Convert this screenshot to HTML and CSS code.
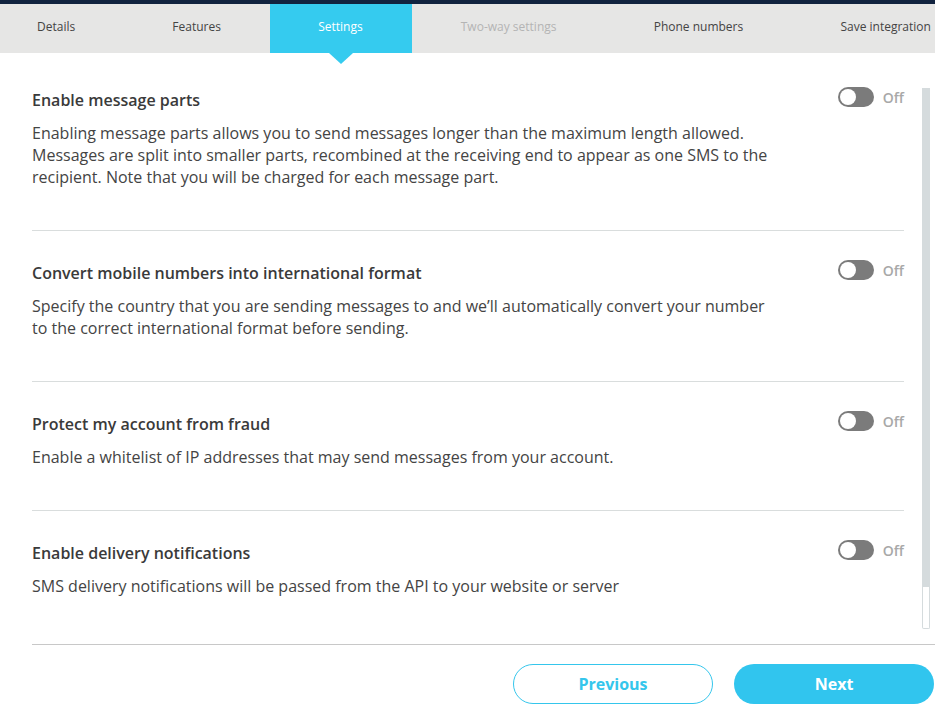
FILE: index.html
```html
<!DOCTYPE html>
<html lang="en">
<head>
<meta charset="utf-8">
<title>Integration settings</title>
<link rel="stylesheet" href="styles.css">
</head>
<body>
<div class="topbar"></div>
<nav class="tabs">
  <div class="tab first">Details</div>
  <div class="tab">Features</div>
  <div class="tab active">Settings</div>
  <div class="tab disabled">Two-way settings</div>
  <div class="tab">Phone numbers</div>
  <div class="tab">Save integration</div>
</nav>
<main class="content">
  <div class="scroll">
    <div class="list">
      <section class="setting">
        <div class="text">
          <h2 class="title">Enable message parts</h2>
          <p class="desc">Enabling message parts allows you to send messages longer than the maximum length allowed. Messages are split into smaller parts, recombined at the receiving end to appear as one SMS to the recipient. Note that you will be charged for each message part.</p>
        </div>
        <div class="switch"><span class="toggle"><span class="knob"></span></span><span class="state">Off</span></div>
      </section>
      <section class="setting">
        <div class="text">
          <h2 class="title">Convert mobile numbers into international format</h2>
          <p class="desc">Specify the country that you are sending messages to and we’ll automatically convert your number to the correct international format before sending.</p>
        </div>
        <div class="switch"><span class="toggle"><span class="knob"></span></span><span class="state">Off</span></div>
      </section>
      <section class="setting">
        <div class="text">
          <h2 class="title">Protect my account from fraud</h2>
          <p class="desc">Enable a whitelist of IP addresses that may send messages from your account.</p>
        </div>
        <div class="switch"><span class="toggle"><span class="knob"></span></span><span class="state">Off</span></div>
      </section>
      <section class="setting last">
        <div class="text">
          <h2 class="title">Enable delivery notifications</h2>
          <p class="desc">SMS delivery notifications will be passed from the API to your website or server</p>
        </div>
        <div class="switch"><span class="toggle"><span class="knob"></span></span><span class="state">Off</span></div>
      </section>
    </div>
    <div class="scrollbar">
      <div class="thumb"></div>
      <div class="track"></div>
    </div>
  </div>
  <footer class="footer">
    <button class="btn btn-outline">Previous</button>
    <button class="btn btn-primary">Next</button>
  </footer>
</main>
</body>
</html>
```
FILE: styles.css
```css
* { box-sizing: border-box; }
html, body { margin: 0; padding: 0; background: #fff; }
body {
  font-family: "Open Sans", "Noto Sans", sans-serif;
  color: #3b3b3b;
  width: 935px;
  height: 705px;
  overflow: hidden;
}
.topbar { height: 4px; background: #11233f; }
.tabs {
  display: flex;
  height: 49px;
  background: #e6e6e5;
  white-space: nowrap;
}
.tab {
  display: flex;
  align-items: center;
  padding: 0 48.6px 4px 48.6px;
  font-size: 12px;
  color: #444;
  position: relative;
}
.tab.first { padding-left: 37px; }
.tab.active {
  background: #35cbef;
  color: #fff;
  padding-right: 49.5px;
}
.tab.active::after {
  content: "";
  position: absolute;
  left: 50%;
  bottom: -11px;
  margin-left: -12px;
  border-left: 12px solid transparent;
  border-right: 12px solid transparent;
  border-top: 11px solid #35cbef;
}
.tab.disabled { color: #b4b4b4; }

.content { padding-left: 32px; }
.scroll {
  display: flex;
  margin-top: 36px;
  height: 540px;
}
.list { width: 872px; }
.setting {
  display: grid;
  grid-template-columns: 1fr auto;
  padding: 31px 0 42.5px;
  border-bottom: 1px solid #d9dddd;
}
.setting:first-child { padding-top: 0; padding-bottom: 42.5px; }
.setting.last { border-bottom: none; }
.text { max-width: 742px; }
.title {
  margin: 0;
  font-size: 16px;
  line-height: 22px;
  font-weight: 600;
  color: #3a3a3a;
}
.desc {
  margin: 10.5px 0 0;
  font-size: 16px;
  line-height: 22px;
  color: #444;
}
.switch {
  display: flex;
  align-items: center;
  gap: 9px;
  height: 20px;
  margin-top: -2px;
  margin-left: -1px;
}
.toggle {
  display: flex;
  align-items: center;
  width: 36px;
  height: 20px;
  border-radius: 10px;
  background: #7b7b7b;
  padding: 2px;
}
.knob {
  width: 16px;
  height: 16px;
  border-radius: 50%;
  background: #fff;
}
.state {
  font-size: 14px;
  font-weight: 600;
  color: #a8a8a8;
}
.scrollbar {
  display: flex;
  flex-direction: column;
  margin-left: 18px;
  margin-top: -1px;
  width: 8px;
}
.thumb { height: 499px; background: #d5dbdd; }
.track { flex: 1; border: 1px solid #d5dbdd; border-top: none; border-radius: 0 0 2px 2px; }

.footer {
  display: flex;
  justify-content: flex-end;
  gap: 21px;
  margin-top: 15px;
  padding-top: 19px;
  border-top: 1px solid #c8c8c8;
}
.btn {
  width: 200px;
  height: 40px;
  border-radius: 20px;
  font-family: "Open Sans", "Noto Sans", sans-serif;
  font-size: 16px;
  font-weight: 700;
  cursor: pointer;
}
.btn-outline {
  background: #fff;
  border: 1px solid #35c6ec;
  color: #35c6ec;
}
.btn-primary {
  background: #31c5ee;
  border: none;
  color: #fff;
  margin-right: 1px;
}
```
